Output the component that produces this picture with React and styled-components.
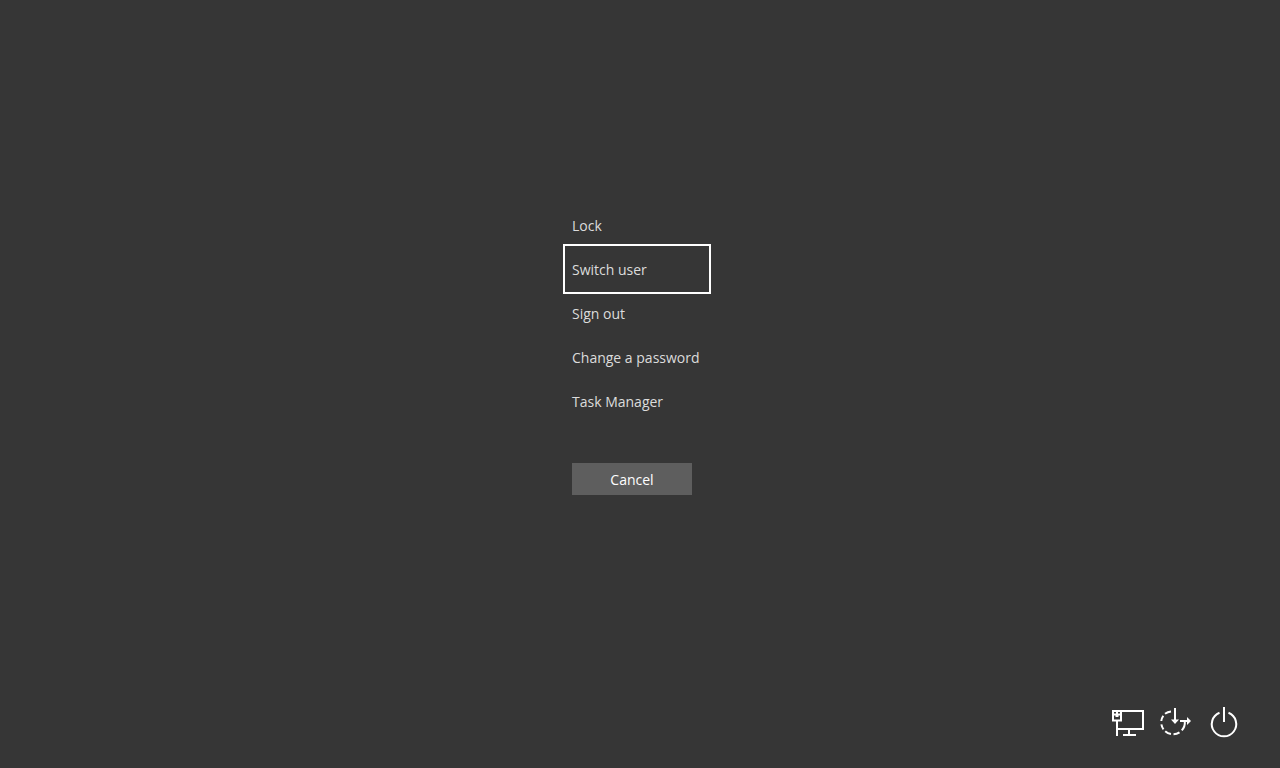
import React, { useState } from 'react';
import styled, { createGlobalStyle } from 'styled-components';

const GlobalStyle = createGlobalStyle`
  * {
    box-sizing: border-box;
  }

  body {
    margin: 0;
    background: #363636;
    font-family: 'Segoe UI', 'Open Sans', 'Noto Sans', sans-serif;
  }
`;

const Screen = styled.div`
  display: flex;
  flex-direction: column;
  min-height: 100vh;
  background: #363636;
`;

const Main = styled.main`
  flex: 1;
  display: flex;
  align-items: center;
  justify-content: center;
`;

const Panel = styled.div`
  display: flex;
  flex-direction: column;
  align-items: flex-start;
  padding-right: 6px;
`;

const Options = styled.nav`
  display: flex;
  flex-direction: column;
  min-width: 142px;
`;

const Option = styled.button`
  height: 44px;
  padding: 2px 6px 0;
  border: none;
  background: none;
  color: #dcdcdc;
  font-family: inherit;
  font-size: 14px;
  line-height: 20px;
  text-align: left;
  white-space: nowrap;
  cursor: pointer;
  outline: ${({ $selected }) => ($selected ? '2px solid #fff' : 'none')};
  outline-offset: 1px;
`;

const CancelButton = styled.button`
  width: 120px;
  height: 32px;
  margin: 40px 0 0 6px;
  padding: 2px 6px 0;
  border: none;
  background: #5e5e5e;
  color: #fff;
  font-family: inherit;
  font-size: 14px;
  line-height: 20px;
  cursor: pointer;
`;

const Footer = styled.footer`
  display: flex;
  justify-content: flex-end;
  padding: 2px 32px 24px;
`;

const IconButton = styled.button`
  display: flex;
  width: 48px;
  height: 44px;
  padding: 0;
  border: none;
  background: none;
  color: #fff;
  cursor: pointer;
`;

const Icon = styled.svg`
  width: 48px;
  height: 44px;
  fill: none;
  stroke: currentColor;
  stroke-width: 2;
`;

const NetworkIcon = () => (
  <Icon viewBox="0 0 48 44" aria-hidden="true">
    <path d="M17 11H39V29H14" />
    <path d="M9 11H17V20.5H9Z" />
    <path d="M13 11V14M9 14.5H17" />
    <path d="M11.5 15H14.5V17H11.5Z" fill="currentColor" stroke="none" />
    <path d="M13 20V36" />
    <path d="M25 29V35M19 35H32" />
  </Icon>
);

const AccessIcon = () => (
  <Icon viewBox="0 0 48 44" aria-hidden="true">
    <path d="M32.8 21.5A11.8 11.8 0 0 1 29.8 30.4M27.5 32.3A11.8 11.8 0 0 1 21.5 34.3M19 34.1A11.8 11.8 0 0 1 13.2 31.3M11.5 29.3A11.8 11.8 0 0 1 9.4 24.3M9.3 21A11.8 11.8 0 0 1 11.3 15.7M13 13.8A11.8 11.8 0 0 1 19 11.4" />
    <path d="M23 8V22" />
    <path d="M19 19.5H27L23 24Z" fill="currentColor" stroke="none" />
    <path d="M28 21H36" />
    <path d="M35 17L39 21L35 25Z" fill="currentColor" stroke="none" />
  </Icon>
);

const PowerIcon = () => (
  <Icon viewBox="0 0 48 44" aria-hidden="true">
    <path d="M19.5 12.8A12.2 12.2 0 1 0 28.5 12.8" />
    <path d="M24 7V22" />
  </Icon>
);

const options = ['Lock', 'Switch user', 'Sign out', 'Change a password', 'Task Manager'];

const App = () => {
  const [selected, setSelected] = useState('Switch user');

  return (
    <>
      <GlobalStyle />
      <Screen>
        <Main>
          <Panel>
            <Options>
              {options.map((label) => (
                <Option
                  key={label}
                  type="button"
                  $selected={label === selected}
                  onClick={() => setSelected(label)}
                >
                  {label}
                </Option>
              ))}
            </Options>
            <CancelButton type="button">Cancel</CancelButton>
          </Panel>
        </Main>
        <Footer>
          <IconButton type="button" aria-label="Network">
            <NetworkIcon />
          </IconButton>
          <IconButton type="button" aria-label="Ease of access">
            <AccessIcon />
          </IconButton>
          <IconButton type="button" aria-label="Power">
            <PowerIcon />
          </IconButton>
        </Footer>
      </Screen>
    </>
  );
};

export default App;
